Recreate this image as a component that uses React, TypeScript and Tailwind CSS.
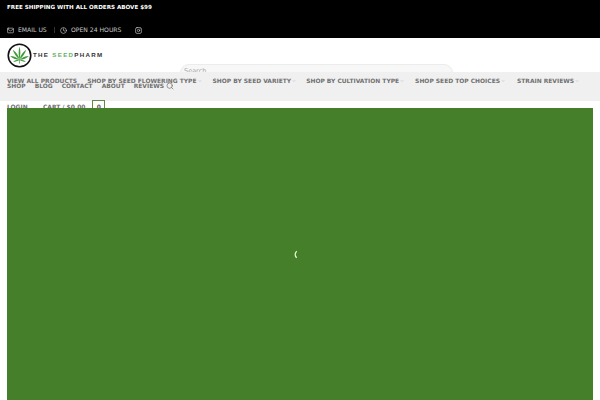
import { Mail, Clock, Instagram, Search, ChevronDown } from "lucide-react";

const row1 = [
  ["VIEW ALL PRODUCTS", false, "mr-[10px]"],
  ["SHOP BY SEED FLOWERING TYPE", true, "mr-[11px]"],
  ["SHOP BY SEED VARIETY", true, "mr-[10px]"],
  ["SHOP BY CULTIVATION TYPE", true, "mr-[11px]"],
  ["SHOP SEED TOP CHOICES", true, "mr-[12px]"],
  ["STRAIN REVIEWS", true, "mr-0"],
] as const;
const row2 = ["SHOP", "BLOG", "CONTACT", "ABOUT", "REVIEWS"];

function Leaf() {
  return (
    <svg viewBox="0 0 28 28" className="w-[25px] h-[25px] shrink-0">
      <circle cx="14" cy="14" r="12.6" fill="#fff" stroke="#111" strokeWidth="1.8" />
      <g fill="#3f9b3a">
        <path d="M14 4 C12.6 9 12.8 13 14 19 C15.2 13 15.4 9 14 4Z" />
        <path d="M6.5 7.5 C7.5 11.5 10 15 14 18.5 C12.8 13.8 10.5 10 6.5 7.5Z" />
        <path d="M21.5 7.5 C20.5 11.5 18 15 14 18.5 C15.2 13.8 17.5 10 21.5 7.5Z" />
        <path d="M3.5 14.5 C6 17 9.5 18.6 14 18.8 C11 16 7.5 14.6 3.5 14.5Z" />
        <path d="M24.5 14.5 C22 17 18.5 18.6 14 18.8 C17 16 20.5 14.6 24.5 14.5Z" />
        <path d="M7 21 C9.5 21 12 20.2 14 19 C11.5 18.6 9 19.4 7 21Z" />
        <path d="M21 21 C18.5 21 16 20.2 14 19 C16.5 18.6 19 19.4 21 21Z" />
        <rect x="13.6" y="18" width="0.8" height="5" />
      </g>
    </svg>
  );
}

export default function App() {
  return (
    <div className="w-[600px] h-[400px] overflow-hidden bg-white font-['DejaVu_Sans',sans-serif]">
      <div className="h-[38px] bg-black text-white pl-[7px] pr-[7px] flex flex-col justify-between pt-[2px] pb-[1px]">
        <div className="text-[5.6px] leading-[10px] font-bold">FREE SHIPPING WITH ALL ORDERS ABOVE $99</div>
        <div className="flex items-center h-[14px] text-[6.1px] text-[#c8c8c8]">
          <Mail className="w-[7px] h-[7px] mr-[4px] text-[#ddd]" />
          <span className="w-[29px]">EMAIL US</span>
          <span className="w-px h-[6px] bg-[#333] ml-[7px]" />
          <Clock className="w-[7px] h-[7px] ml-[5px] mr-[4px] text-[#ddd]" />
          <span className="w-[50px] whitespace-nowrap">OPEN 24 HOURS</span>
          <Instagram className="w-[7px] h-[7px] ml-[14px] text-[#ddd]" />
        </div>
      </div>

      <div className="h-[34px] flex items-center px-[7px] relative">
        <Leaf />
        <div className="ml-[1px] text-[6.2px] tracking-[1.3px] font-['Liberation_Sans',sans-serif] font-bold text-[#333] whitespace-nowrap">
          THE <span className="text-[#67b067]">SEED</span>PHARM
        </div>
        <div className="absolute left-[180px] top-[26px] w-[273px] h-[18px] rounded-[9px] border border-[#ececec] bg-[#f7f7f7] px-[3px] text-[6.5px] leading-[13px] text-[#a8a8a8]">
          Search...
        </div>
      </div>

      <div className="relative h-[29px] bg-[#f1f0f0] px-[7px] pt-[6px] text-[5.95px] leading-[6px] font-bold text-[#707070]">
        <div className="flex items-center h-[5px] whitespace-nowrap">
          {row1.map(([label, chevron, gap]) => (
            <span key={label} className={`flex items-center ${gap}`}>
              {label}
              {chevron && <ChevronDown className="w-[4px] h-[4px] ml-[1px] text-[#999]" />}
            </span>
          ))}
        </div>
        <div className="flex items-center h-[6px]">
          {row2.map((label) => (
            <span key={label} className="mr-[9px]">{label}</span>
          ))}
          <Search className="w-[8px] h-[8px] -ml-[7px] text-[#666]" />
        </div>
      </div>

      <div className="h-[7px] relative z-10 flex items-start px-[7px] text-[5.95px] font-bold text-[#707070] leading-[9px] pt-[1px]">
        <span className="w-[36px]">LOGIN</span>
        <span>CART / $0.00</span>
        <span className="ml-[7px] -mt-[2px] w-[13px] h-[14px] border border-[#5e8a45] text-center text-[#555] leading-[11px]">0</span>
      </div>

      <div className="relative z-20 mx-[7px] h-[292px] bg-[#457f29] flex items-center justify-center">
        <svg viewBox="0 0 6 10" className="w-[5px] h-[9px] -ml-[10px]">
          <path d="M4.5 1 C2 3 2 7 4.5 9" fill="none" stroke="#e0f4d0" strokeWidth="1.6" />
        </svg>
      </div>
    </div>
  );
}
